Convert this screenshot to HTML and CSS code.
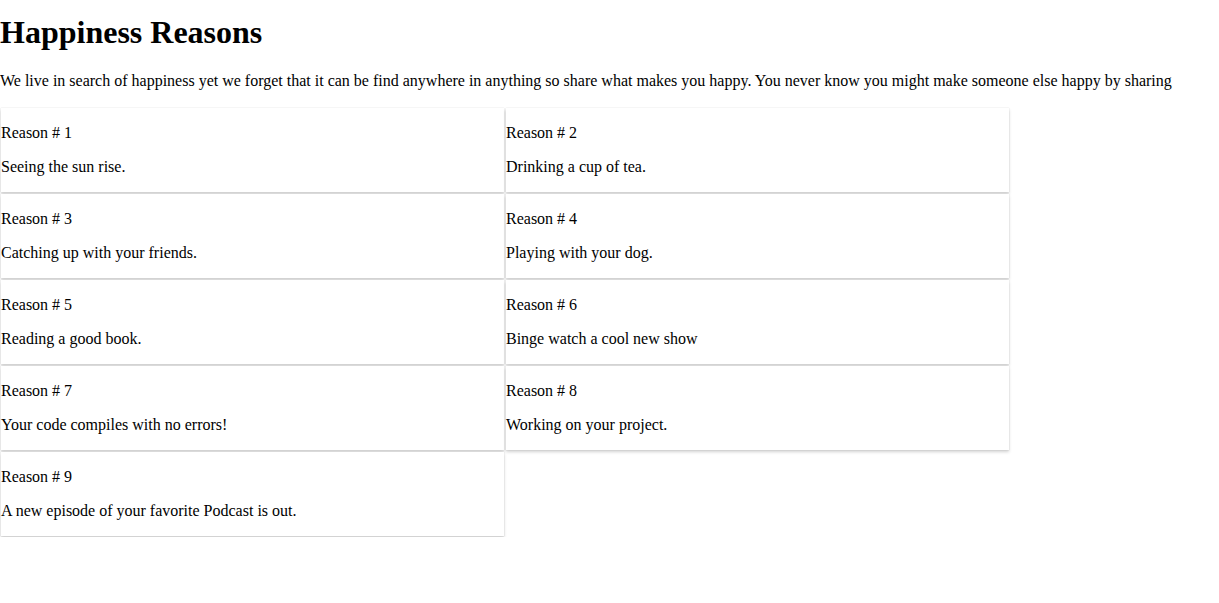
FILE: index.html
```html
<!DOCTYPE html>
<html>
<head>
<meta charset="utf-8">
<title>Happiness Reasons</title>
<link rel="stylesheet" href="styles.css">
</head>
<body>
<h1 class="title">Happiness Reasons</h1>
<p class="intro">We live in search of happiness yet we forget that it can be find anywhere in anything so share what makes you happy. You never know you might make someone else happy by sharing</p>
<div class="grid">
  <div class="card"><p>Reason # 1</p><p>Seeing the sun rise.</p></div>
  <div class="card"><p>Reason # 2</p><p>Drinking a cup of tea.</p></div>
  <div class="card"><p>Reason # 3</p><p>Catching up with your friends.</p></div>
  <div class="card"><p>Reason # 4</p><p>Playing with your dog.</p></div>
  <div class="card"><p>Reason # 5</p><p>Reading a good book.</p></div>
  <div class="card"><p>Reason # 6</p><p>Binge watch a cool new show</p></div>
  <div class="card"><p>Reason # 7</p><p>Your code compiles with no errors!</p></div>
  <div class="card"><p>Reason # 8</p><p>Working on your project.</p></div>
  <div class="card"><p>Reason # 9</p><p>A new episode of your favorite Podcast is out.</p></div>
</div>
</body>
</html>
```
FILE: styles.css
```css
html, body {
  margin: 0;
  padding: 0;
  background: #fff;
  color: #000;
  font-family: "Liberation Serif", "Times New Roman", serif;
  font-size: 16px;
}
.title {
  font-size: 32px;
  font-weight: bold;
  line-height: 37px;
  margin: 14px 0 21px;
}
.intro {
  line-height: 18px;
  margin: 1px 0 17px;
}
.grid {
  display: flex;
  flex-wrap: wrap;
  width: 1010px;
}
.card {
  width: 503px;
  margin: 1px;
  background: #fff;
  box-shadow: 0 0 1px rgba(0, 0, 0, 0.18), 0 2px 3px rgba(0, 0, 0, 0.18);
}
.card p {
  margin: 16px 0;
  line-height: 18px;
}
```
